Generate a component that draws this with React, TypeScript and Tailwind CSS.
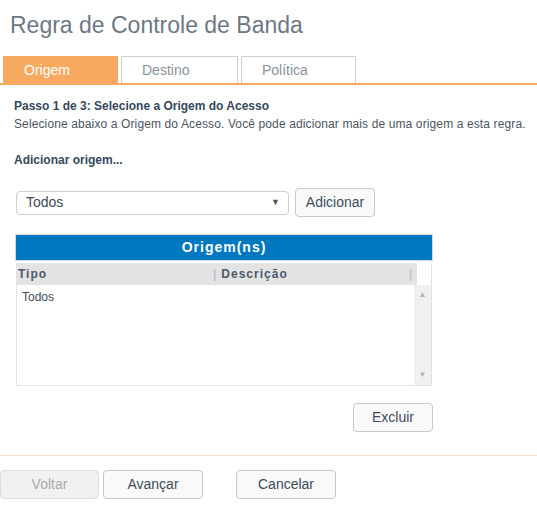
import React from 'react';

const font = { fontFamily: '"Liberation Sans", Arial, sans-serif' };

const Button = ({ label, className = '', disabled = false }: { label: string; className?: string; disabled?: boolean }) => (
  <button
    className={`h-[29px] rounded-[4px] border text-[14px] ${
      disabled ? 'border-[#dcdcdc] bg-[#f1f1f1] text-[#a9a9a9]' : 'border-[#c8c8c8] bg-[#f9f9f9] text-[#3e4c5c]'
    } ${className}`}
  >
    {label}
  </button>
);

const tabs = [
  { label: 'Origem', w: 'w-[115px]' },
  { label: 'Destino', w: 'w-[117px]' },
  { label: 'Política', w: 'w-[115px]' },
];

export default function App() {
  return (
    <div className="min-h-screen bg-white text-[#3e4c5c]" style={font}>
      <h1 className="pl-[10px] pt-[11px] text-[23px] leading-[28px] text-[#6d7885]">Regra de Controle de Banda</h1>

      <div className="mt-[17px] flex gap-[3px] border-b-2 border-[#f8a960] pl-[3px]">
        {tabs.map((t, i) => (
          <div
            key={t.label}
            className={`h-[27px] ${t.w} border border-b-0 pl-[20px] text-[14px] leading-[26px] ${
              i === 0 ? 'border-[#f8a960] bg-[#f8a960] text-white' : 'border-[#cfcfcf] bg-white text-[#8a929b]'
            }`}
          >
            {t.label}
          </div>
        ))}
      </div>

      <div className="pl-[14px] pt-[12px] text-[12px]">
        <p className="font-bold leading-[18px] text-[#34475c]">Passo 1 de 3: Selecione a Origem do Acesso</p>
        <p className="leading-[18px] tracking-[0.12px] text-[#4b5561]">
          Selecione abaixo a Origem do Acesso. Você pode adicionar mais de uma origem a esta regra.
        </p>
        <p className="mt-[18px] font-bold leading-[18px] text-[#34475c]">Adicionar origem...</p>
      </div>

      <div className="mt-[19px] flex items-center gap-[6px] pl-[16px]">
        <div className="flex h-[24px] w-[273px] items-center justify-between rounded-[4px] border border-[#cfcfcf] pl-[9px] pr-[8px] text-[14px] text-[#3e4c5c]">
          <span>Todos</span>
          <span className="text-[9px] text-[#555]">▼</span>
        </div>
        <Button label="Adicionar" className="w-[80px]" />
      </div>

      <div className="ml-[15px] mt-[17px] w-[418px]">
        <div className="h-[27px] border border-[#d8d8d8] bg-[#0078c0] text-center text-[14px] font-bold leading-[25px] tracking-[1px] text-white">
          Origem(ns)
        </div>
        <div className="mx-[1px] mt-[2px] border-x border-b border-[#e2e2e2]">
          <div className="flex h-[22px] text-[12px] font-bold tracking-[1px] text-[#4a5a6b]">
            <div className="flex flex-1 items-center bg-[#e3e3e3]">
              <span className="w-[196px] pl-[1px]">Tipo</span>
              <span className="text-[#b8c4d0]">|</span>
              <span className="flex-1 pl-[4px]">Descrição</span>
              <span className="pr-[4px] text-[#b8c4d0]">|</span>
            </div>
            <div className="w-[14px] bg-white" />
          </div>
          <div className="flex h-[100px]">
            <div className="flex-1 pl-[5px] pt-[3px] text-[12px] text-[#3e4c5c]">Todos</div>
            <div className="flex w-[17px] flex-col items-center justify-between bg-[#f0f0f0] py-[4px] text-[8px] text-[#b0b0b0]">
              <span>▲</span>
              <span>▼</span>
            </div>
          </div>
        </div>
      </div>

      <div className="flex w-[433px] justify-end pt-[17px]">
        <Button label="Excluir" className="w-[80px]" />
      </div>

      <div className="mt-[23px] border-t border-[#f7e0cc]" />

      <div className="flex pt-[14px]">
        <Button label="Voltar" className="w-[99px]" disabled />
        <Button label="Avançar" className="ml-[4px] w-[100px]" />
        <Button label="Cancelar" className="ml-[33px] w-[100px]" />
      </div>
    </div>
  );
}
